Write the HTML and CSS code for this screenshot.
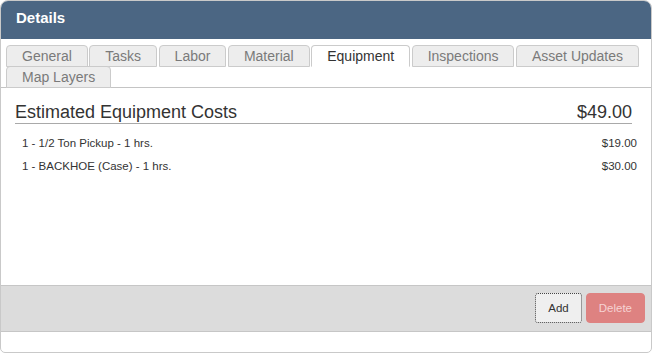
FILE: index.html
```html
<!DOCTYPE html>
<html lang="en">
<head>
	<meta charset="UTF-8">
	<meta name="viewport" content="width=device-width, initial-scale=1.0">
	<title>Details</title>
	<link rel="stylesheet" href="styles.css">
</head>
<body>
	<div class="panel">
		<div class="panel__header">Details</div>
		<ul class="panel__tabs tabs">
			<li class="tabs__item">General</li>
			<li class="tabs__item">Tasks</li>
			<li class="tabs__item">Labor</li>
			<li class="tabs__item">Material</li>
			<li class="tabs__item active">Equipment</li>
			<li class="tabs__item">Inspections</li>
			<li class="tabs__item">Asset Updates</li>
			<li class="tabs__item">Map Layers</li>
		</ul>
		<div class="panel__content costs">
			<div class="costs__header">
				<span>Estimated Equipment Costs</span>
				<span>$49.00</span>
			</div>
			<div class="costs__row">
				<span>1 - 1/2 Ton Pickup - 1 hrs.</span>
				<span>$19.00</span>
			</div>
			<div class="costs__row">
				<span>1 - BACKHOE (Case) - 1 hrs.</span>
				<span>$30.00</span>
			</div>
		</div>
		<div class="panel__footer">
			<button class="btn btn__add">Add</button>
			<button class="btn btn__delete">Delete</button>
		</div>
	</div>
</body>
</html>
```

FILE: styles.css
```css
*{
	margin: 0;
	padding: 0;
	box-sizing: border-box;
}
body{
	background-color: white;
	font-family: "Liberation Sans", Arial, sans-serif;
	color: #333;
}

.panel{
	display: flex;
	flex-direction: column;
	width: 652px;
	height: 353px;
	border: 1px solid #c9c9c9;
	border-radius: 8px 8px 5px 5px;
	overflow: hidden;
}

.panel__header{
	height: 38px;
	line-height: 34px;
	padding-left: 15px;
	background-color: #4b6683;
	color: white;
	font-size: 15px;
	font-weight: bold;
}

.tabs{
	display: flex;
	flex-wrap: wrap;
	list-style: none;
	padding: 6px 0 0 5px;
	border-bottom: 1px solid #c4c4c4;
}
.tabs__item{
	height: 22px;
	line-height: 19px;
	padding: 1px 15px 0;
	margin: 0 1.5px -1px 0;
	border: 1px solid #cbcbcb;
	border-radius: 4px 4px 0 0;
	background-color: #ededed;
	color: #7a7a7a;
	font-size: 14px;
}
.tabs__item.active{
	background-color: white;
	border-bottom-color: white;
	color: #333;
}

.panel__content{
	flex-grow: 1;
}
.costs{
	padding: 14px 0 0 0;
}
.costs__header{
	display: flex;
	justify-content: space-between;
	margin: 0 19px 8px 14px;
	line-height: 21px;
	font-size: 18px;
	border-bottom: 1px solid #a9a9a9;
}
.costs__row{
	display: flex;
	justify-content: space-between;
	padding: 0 14px 0 21px;
	line-height: 23px;
	font-size: 11.5px;
}

.panel__footer{
	display: flex;
	justify-content: flex-end;
	gap: 4px;
	padding: 7px 6px 8px;
	margin-bottom: 20px;
	background-color: #dcdcdc;
	border-top: 1px solid #c6c6c6;
	border-bottom: 1px solid #c6c6c6;
}
.btn{
	height: 30px;
	padding: 0 12px;
	border-radius: 4px;
	font-family: "Liberation Sans", Arial, sans-serif;
	font-size: 11.5px;
}
.btn__add{
	background-color: #efefef;
	border: 1px dotted #444;
	border-radius: 3px;
	color: #333;
}
.btn__delete{
	background-color: #de8281;
	border: 1px solid #de8281;
	color: #f6d3d3;
}
```
